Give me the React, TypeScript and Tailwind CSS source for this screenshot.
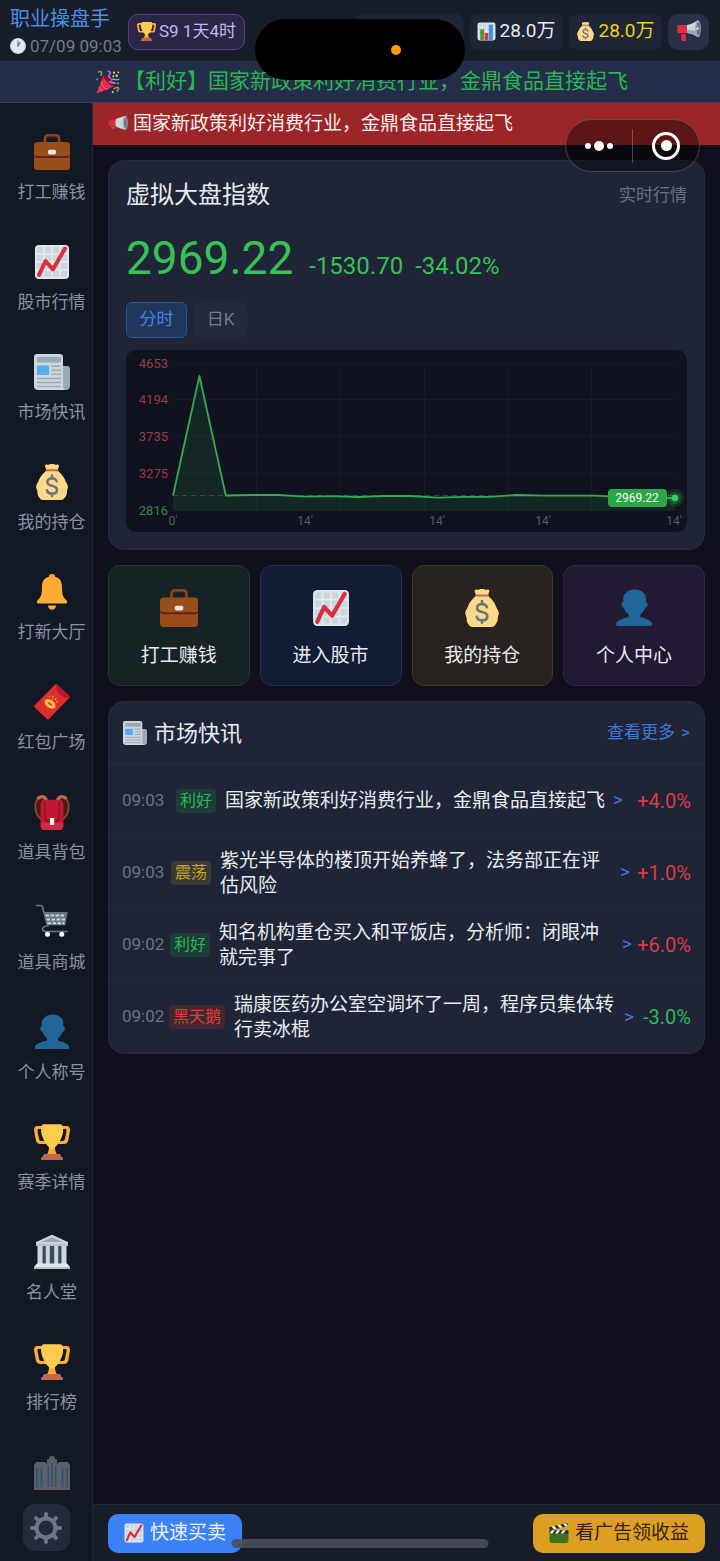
import type { ReactNode, SVGProps } from 'react';

type IconProps = SVGProps<SVGSVGElement>;

function Glyph({ children, ...rest }: IconProps & { children: ReactNode }) {
  return (
    <svg viewBox="0 0 36 36" aria-hidden="true" {...rest}>
      {children}
    </svg>
  );
}

const Briefcase = (p: IconProps) => (
  <Glyph {...p}>
    <path d="M11 10V4.500C11 2.600 12.200 1.400 14 1.400h8c1.800 0 3 1.200 3 3.100V10" fill="none" stroke="#8a451a" strokeWidth="2.600" />
    <path d="M12.400 9V4.400c0-1 .6-1.600 1.600-1.600h8c1 0 1.600.6 1.600 1.600V9" fill="none" stroke="#662113" strokeWidth=".8" />
    <rect y="8" width="36" height="28" rx="3.500" fill="#9a4e1c" />
    <path d="M0 20v1.500C0 23.400 1.500 24 3.500 24h29c2 0 3.500-.6 3.500-2.500V20c0 1.500-1.500 2-3.500 2h-29C1.500 22 0 21.500 0 20z" fill="#662113" />
    <rect x="14" y="15.800" width="8" height="4.600" rx="1.600" fill="#e1e8ed" />
  </Glyph>
);

const GridPaper = () => (
  <>
    <rect x="1" y="1" width="34" height="34" rx="4" fill="#e1e8ed" />
    <path
      fill="#cbd6dc"
      d="M31 3c1.103 0 2 .897 2 2v4h-6V3h4zm-4 16h6v6h-6v-6zm0-2v-6h6v6h-6zM25 3v6h-6V3h6zm-6 8h6v6h-6v-6zm0 8h6v6h-6v-6zM17 3v6h-6V3h6zm-6 8h6v6h-6v-6zm0 8h6v6h-6v-6zM3 5c0-1.103.897-2 2-2h4v6H3V5zm0 6h6v6H3v-6zm0 8h6v6H3v-6zm2 14c-1.103 0-2-.897-2-2v-4h6v6H5zm6 0v-6h6v6h-6zm8 0v-6h6v6h-6zm12 0h-4v-6h6v4c0 1.103-.897 2-2 2z"
    />
  </>
);

const ChartUp = (p: IconProps) => (
  <Glyph {...p}>
    <GridPaper />
    <path d="M5 31l6.500-14L19 25.300 31 4.500" fill="none" stroke="#dd2e44" strokeWidth="4" strokeLinecap="round" strokeLinejoin="round" />
  </Glyph>
);

const BarChart = (p: IconProps) => (
  <Glyph {...p}>
    <GridPaper />
    <rect x="6" y="14" width="7.500" height="20" fill="#5c913b" />
    <rect x="14.500" y="21" width="7" height="13" fill="#dd2e44" />
    <rect x="22.500" y="5" width="7.500" height="29" fill="#3b94d9" />
  </Glyph>
);

const Newspaper = (p: IconProps) => (
  <Glyph {...p}>
    <path d="M28 12h5c1.700 0 3 1.300 3 3v17c0 2-1.500 4-4 4h-7z" fill="#99aab5" />
    <path d="M3 0h23c1.700 0 3 1.300 3 3v29c0 2 1 4 3 4H4c-2.200 0-4-1.500-4-4V3c0-1.700 1.300-3 3-3z" fill="#ccd6dd" />
    <rect x="3" y="3" width="24" height="5.500" rx="1.500" fill="#99aab5" />
    <rect x="3" y="11.500" width="12" height="9.500" rx="1" fill="#55acee" />
    <path d="M17.500 12.200H27M17.500 16.200H27M17.500 20.200H27M3 24.400h24M3 28.500h24M3 32.500h24" stroke="#99aab5" strokeWidth="1.500" />
  </Glyph>
);

const MoneyBag = (p: IconProps) => (
  <Glyph {...p}>
    <path
      d="M12.500 6.500C12 4.500 11 3 11 1.500 12-.3 13.500.8 14.500.8S16.500-.2 18 .2c1.500-.4 2.500.6 3.500.6s2.500-1 3.500.7c0 1.500-1 3-1.500 5 4 3.500 6.500 6 8 10.500.5 1.800 1.800 2.500 2.300 5 .4 2.500-.8 3.500-.8 5.500 0 3-1 5-3 7-1 1.300-2 1.500-4 1.500H10c-2 0-3-.5-4-1.500-2-2-2.500-4-2.500-6.500 0-2-1.700-3.500-1.300-6 .3-2 1.800-3.500 2.300-5 1.500-4.500 4-7 8-10.500z"
      fill="#fdd888"
    />
    <path d="M12.500 5.200h11c1.400 0 1.400 2 0 2h-11c-1.400 0-1.400-2 0-2z" fill="#bf6952" />
    <path d="M22.600 17.200c-.7-2-2.300-3-4.600-3-2.700 0-4.700 1.400-4.700 3.700 0 5.300 9.700 2.500 9.700 7.800 0 2.500-2.100 4-5 4-2.500 0-4.400-1.200-5-3.400M18 11.500v3M18 29.500v2.500" fill="none" stroke="#67757f" strokeWidth="2.500" strokeLinecap="round" />
  </Glyph>
);

const Bell = (p: IconProps) => (
  <Glyph {...p}>
    <path d="M18 0c1.700 0 3 1.200 3.100 2.800C26.500 4.200 28 8.200 28 13c0 7 .8 10 4.300 13.300 1.500 1.400 1 3.200-1 3.200H4.700c-2 0-2.500-1.800-1-3.200C7.200 23 8 20 8 13c0-4.800 1.500-8.800 6.900-10.200C15 1.200 16.300 0 18 0z" fill="#ffac33" />
    <path d="M14 31.500h8c0 2.500-1.800 4.300-4 4.300s-4-1.800-4-4.300z" fill="#ffac33" />
  </Glyph>
);

const RedEnvelope = (p: IconProps) => (
  <Glyph {...p}>
    <path d="M21.200.6c.5-.5 1.200-.6 1.800-.1l12.300 11.300c.7.600.7 1.200.1 1.900L15 35c-.6.7-1.400.7-2.100.1L.7 23.400c-.7-.6-.7-1.400 0-2.100z" fill="#dd2e2e" />
    <path d="M21.800.3c.4-.2.900 0 1.200.2l12.300 11.300c.6.500.7 1.100.2 1.700-4.500 1-14-2.500-13.700-13.200z" fill="#b31b25" />
    <g stroke="#ffc83d" fill="none" strokeLinecap="round">
      <path d="M12 17c0 4 4 7 8 6M14 16.500c2 0 5.500 2.500 6 4.500" strokeWidth="2.800" />
      <path d="M15.500 12.700v.1M19 12.500v.7M21.800 14.800l-.4.500M23 18h.1M18 16h.1" strokeWidth="1.300" />
    </g>
  </Glyph>
);

const Backpack = (p: IconProps) => (
  <Glyph {...p}>
    <path d="M11 5C7 1.500 1.500 5 1.300 12c0 6.500 2.500 11 6 13.500zM25 5c4-3.500 9.500 0 9.700 7 0 6.500-2.500 11-6 13.500z" fill="#4a1a12" stroke="#8a4430" strokeWidth="1.800" />
    <path d="M3.500 5C6.500 1.200 11 1.800 12.500 6.500M32.500 5C29.500 1.200 25 1.800 23.500 6.500" fill="none" stroke="#bf6952" strokeWidth="3.200" />
    <path d="M11 5.800h14c2.800 0 4.500 2 4.500 5V31c0 3-.7 5-3.500 5H10c-2.800 0-3.500-2-3.500-5V10.800c0-3 1.700-5 4.500-5z" fill="#be1931" />
    <path d="M7 28.500c0 4.500 0 7.500 4 7.500h14c4 0 4-3 4-7.500-7 1-15 1-22 0z" fill="#d32a40" />
    <path d="M11 8v15c0 2.500 1.500 4 4 4h6c2.500 0 4-1.500 4-4V8" fill="none" stroke="#8c1024" strokeWidth="1.400" />
    <rect x="16" y="24" width="4.200" height="7" fill="#fff" />
  </Glyph>
);

const Cart = (p: IconProps) => (
  <Glyph {...p}>
    <path d="M2.500 1.500h4.200c1 0 1.500.5 1.800 1.500l5.200 19c-3.500.3-5.200 1.600-5.200 3.200 0 2 2 2.300 4 2.300H33" fill="none" stroke="#66757f" strokeWidth="1.700" strokeLinecap="round" />
    <path d="M9.500 8h24.200L31.200 21.200H13.200z" fill="#66757f" />
    <path d="M11.500 11.500h20M12.500 15.500h18.500M13.500 19.200h17" stroke="#ccd6dd" strokeWidth="2" strokeDasharray="3.600 1.400" />
    <circle cx="13.500" cy="30.200" r="2.500" fill="#f5f8fa" />
    <circle cx="27.800" cy="30.200" r="2.500" fill="#f5f8fa" />
  </Glyph>
);

const Person = (p: IconProps) => (
  <Glyph {...p}>
    <path
      fill="#226699"
      d="M24 26.799v-2.566c2-1.348 4.080-3.779 4.703-6.896.186.103.206.170.413.170.991 0 1.709-1.287 1.709-2.873 0-1.562-.823-2.827-1.794-2.865.187-.674.293-1.577.293-2.735C29.324 5.168 26 .527 18.541.527c-6.629 0-10.777 4.641-10.777 8.507 0 1.123.069 2.043.188 2.755-.911.137-1.629 1.352-1.629 2.845 0 1.587.804 2.873 1.796 2.873.206 0 .025-.067.209-.170C8.952 20.453 11 22.885 13 24.232v2.414c-5 .645-12 3.437-12 6.230v1.061C1 35 2.076 35 3.137 35h29.725C33.924 35 35 35 35 33.938v-1.061c0-2.615-6-5.225-11-6.078z"
    />
  </Glyph>
);

const Trophy = (p: IconProps) => (
  <Glyph {...p}>
    <path
      fill="#ffac33"
      d="M5.123 5h6C12.227 5 13 4.896 13 6V4c0-1.104-.773-2-1.877-2h-8c-2 0-3.583 2.125-3 5 0 0 1.791 9.375 1.917 9.958C2.373 18.500 4.164 20 6.081 20h6.958c1.105 0-.039-1.896-.039-3v-2c0 1.104-.773 2-1.877 2h-4c-1.104 0-1.833-1.042-2-2S3.539 7 3.539 7c-.167-1.500.479-2 1.584-2zm25.812 0h-6C23.831 5 23 4.896 23 6V4c0-1.104.831-2 1.935-2h8c2 0 3.584 2.125 3 5 0 0-1.633 9.419-1.771 10-.354 1.500-2.042 3-4 3h-7.146C21.914 20 23 18.104 23 17v-2c0 1.104.831 2 1.935 2h4c1.104 0 1.833-1.042 2-2s1.584-8 1.584-8c.166-1.500-.479-2-1.584-2zM20.832 22c0-6.958-2.709 0-2.709 0s-3-6.958-3 0-3.291 10-3.291 10h12.292c-.001 0-3.292-3.042-3.292-10z"
    />
    <path fill="#ffcc4d" d="M29.123 6.577c0 6.775-6.770 18.192-11 18.192-4.231 0-11-11.417-11-18.192 0-5.195 1-6.319 3-6.319 1.374 0 6.025-.027 8-.027l7-.001c2.917-.001 4 .684 4 6.347z" />
    <path
      fill="#c1694f"
      d="M27 33c0 1.104.227 2-.877 2h-16C9.018 35 9 34.104 9 33v-1c0-1.104 1.164-2 2.206-2h13.917c1.042 0 1.877.896 1.877 2v1zM29 34.625c0 .760.165 1.375-1.252 1.375H8.498C7.206 36 7 35.385 7 34.625v-.250C7 33.615 7.738 33 8.498 33h19.250c.759 0 1.252.615 1.252 1.375v.250z"
    />
  </Glyph>
);

const Temple = (p: IconProps) => (
  <Glyph {...p}>
    <path d="M4 11h28v20H4z" fill="#3e4a55" />
    <path d="M3.500 11h5v19h-5zM11.800 11h4v19h-4zM20.200 11h4v19h-4zM27.500 11h5v19h-5z" fill="#ccd6dd" />
    <path d="M18 .8L34 8v3H2V8z" fill="#ccd6dd" />
    <path d="M18 3.200L28.500 8h-21z" fill="#99aab5" />
    <path d="M2 9.800h32V12H2z" fill="#b8c5cd" />
    <path d="M3 29.500h30l3 3.500v1.800H0V33z" fill="#e1e8ed" />
    <path d="M0 33h36v1.800H0z" fill="#b8c5cd" />
  </Glyph>
);

const Skyline = (p: IconProps) => (
  <Glyph {...p}>
    <path d="M0 36V11l2-3h9l2 2V6l2-1c0-4.500 6-4.500 6 0l2 1v4l2-2h9l2 3v25z" fill="#8b8f98" />
    <path d="M3 14v19M7.500 14v19M14.500 12v21M18 9v24M21.500 12v21M28.500 14v19M33 14v19" stroke="#3f7ba6" strokeWidth="1.800" />
    <path d="M5.200 13v22M10.500 13v22M16.200 10v25M19.800 10v25M25.500 13v22M30.800 13v22" stroke="#a08f86" strokeWidth="1.600" />
    <path d="M0 34.200h36V36H0z" fill="#a08f86" />
  </Glyph>
);

const Gear = (p: IconProps) => (
  <Glyph {...p}>
    <circle cx="18" cy="18" r="10.600" fill="none" stroke="currentColor" strokeWidth="4.600" />
    <path d="M18 7V2.200M18 29v4.800M7 18H2.200M29 18h4.800M10.200 10.200L6.800 6.800M25.800 25.800l3.400 3.400M25.800 10.200l3.400-3.400M10.200 25.800l-3.400 3.400" stroke="currentColor" strokeWidth="4.400" strokeLinecap="round" />
  </Glyph>
);

const Megaphone = (p: IconProps) => (
  <Glyph {...p}>
    <path d="M5.500 17h7.500l.5 13c0 1-.7 1.600-1.700 1.600H8.500c-1.200 0-1.800-.7-2-1.800z" fill="#dd2e44" />
    <path d="M2.500 7.500H17v12H2.500c-1.300 0-2-.8-2-2v-8c0-1.200.7-2 2-2z" fill="#dd2e44" />
    <path d="M5.500 19.500H13v1.800H5.600z" fill="#a0041e" />
    <path d="M15 7.500C21 6.500 26 4 31.500.5v25C26 22 21 20 15 19.500z" fill="#ccd6dd" />
    <path d="M15 14.500l16 2v9C26 22 21 20 15 19.500z" fill="#99aab5" />
    <ellipse cx="31.500" cy="13" rx="4.300" ry="12.800" fill="#99aab5" />
    <ellipse cx="32" cy="13" rx="2.700" ry="10" fill="#66757f" />
    <circle cx="30.800" cy="13" r="2" fill="#ccd6dd" />
  </Glyph>
);

const Loudspeaker = (p: IconProps) => (
  <Glyph {...p}>
    <path d="M3 12l14-4v16L3 21c-2.500-1-2.500-8 0-9z" fill="#dd2e44" />
    <path d="M5 22l8 1.700c-1 4.500-7 4-8-1.700z" fill="#66757f" />
    <path d="M15 8.500L31 3v26l-16-5.500c-2-4-2-11 0-15z" fill="#ccd6dd" />
    <ellipse cx="31" cy="16" rx="4.500" ry="13" fill="#99aab5" />
    <ellipse cx="31.500" cy="16" rx="2.400" ry="9" fill="#66757f" />
  </Glyph>
);

const Party = (p: IconProps) => (
  <Glyph {...p}>
    <path d="M11.500 8L1 33.500c-.5 1.300.3 2 1.500 1.500L28 24.500C22 21 15.500 15 11.500 8z" fill="#dd2e44" />
    <path d="M8 17c1 6 5 10.500 9.500 12.200M4.500 25.500c.8 2.500 2.500 4.500 5 6" stroke="#ea596e" strokeWidth="2" fill="none" />
    <ellipse cx="20" cy="16" rx="4" ry="11.500" transform="rotate(-45 20 16)" fill="#a0041e" />
    <path d="M4 3c4-2 6 1 3.500 5M27 28c4-2 6-3 7-1s-3 3-2 5" stroke="#77b255" strokeWidth="2.200" fill="none" strokeLinecap="round" />
    <path d="M18 2c4 0 4 3 2 5s0 4 1.500 5" stroke="#8f7bea" strokeWidth="2.400" fill="none" strokeLinecap="round" />
    <path d="M23 15c3-3 7 1 11-1M20 18l9 2" stroke="#55acee" strokeWidth="2.200" fill="none" strokeLinecap="round" />
    <g fill="#ffcc4d">
      <circle cx="27" cy="4" r="1.700" />
      <circle cx="31" cy="8.500" r="1.900" />
      <circle cx="26" cy="9.500" r="1.500" />
      <circle cx="33.500" cy="3.500" r="1.400" />
      <circle cx="33" cy="20" r="1.400" />
      <circle cx="25" cy="33" r="1.500" />
    </g>
    <circle cx="1.800" cy="14" r="1.600" fill="#9266cc" />
  </Glyph>
);

const Clock = (p: IconProps) => (
  <Glyph {...p}>
    <circle cx="18" cy="18" r="17" fill="#e1e8ed" stroke="#ccd6dd" strokeWidth="2" />
    <path d="M18 19V6.500M18 19l4.500-9" stroke="#66757f" strokeWidth="2.600" strokeLinecap="round" />
  </Glyph>
);

const Clapper = (p: IconProps) => (
  <Glyph {...p}>
    <path d="M1 17h34v15c0 2.200-1.800 4-4 4H5c-2.200 0-4-1.800-4-4z" fill="#3e721d" />
    <path d="M1 13h34v6H1z" fill="#292f33" />
    <path d="M5 13h5l-4 6H1zM15 13h5l-4 6h-5zM25 13h5l-4 6h-5z" fill="#f5f8fa" />
    <path d="M0 7.500L32.500 0l1.400 5.800L1.400 13.300z" fill="#292f33" />
    <path d="M4.500 6.500L9.500 5.300 14 10.500l-5 1.100zM15 4L20 2.900l4.500 5.100-5 1.200zM25.500 1.600l4.500-1 3.900 5.200-4 .9z" fill="#f5f8fa" />
  </Glyph>
);

const navItems = [
  { label: '打工赚钱', Icon: Briefcase },
  { label: '股市行情', Icon: ChartUp },
  { label: '市场快讯', Icon: Newspaper },
  { label: '我的持仓', Icon: MoneyBag },
  { label: '打新大厅', Icon: Bell },
  { label: '红包广场', Icon: RedEnvelope },
  { label: '道具背包', Icon: Backpack },
  { label: '道具商城', Icon: Cart },
  { label: '个人称号', Icon: Person },
  { label: '赛季详情', Icon: Trophy },
  { label: '名人堂', Icon: Temple },
  { label: '排行榜', Icon: Trophy },
];

const shortcuts = [
  { label: '打工赚钱', Icon: Briefcase, tone: 'border-[#20382f] bg-[#172225]' },
  { label: '进入股市', Icon: ChartUp, tone: 'border-[#1b2f57] bg-[#131c35]' },
  { label: '我的持仓', Icon: MoneyBag, tone: 'border-[#443823] bg-[#28231f]' },
  { label: '个人中心', Icon: Person, tone: 'border-[#382350] bg-[#221932]' },
];

const news = [
  { time: '09:03', tag: '利好', tone: 'bg-[#1d3d36] text-[#2fb556]', text: '国家新政策利好消费行业，金鼎食品直接起飞', change: '+4.0%', up: true, timeW: 'w-[54px]', changeW: 'w-[68px]' },
  { time: '09:03', tag: '震荡', tone: 'bg-[#3b3b36] text-[#c3a52e]', text: '紫光半导体的楼顶开始养蜂了，法务部正在评估风险', change: '+1.0%', up: true, timeW: 'w-[49px]', changeW: 'w-[61px]' },
  { time: '09:02', tag: '利好', tone: 'bg-[#1d3d36] text-[#2fb556]', text: '知名机构重仓买入和平饭店，分析师：闭眼冲就完事了', change: '+6.0%', up: true, timeW: 'w-[48px]', changeW: 'w-[59px]' },
  { time: '09:02', tag: '黑天鹅', tone: 'bg-[#43262f] text-[#e23b3b]', text: '瑞康医药办公室空调坏了一周，程序员集体转行卖冰棍', change: '-3.0%', up: false, timeW: 'w-[47px]', changeW: 'w-[57px]' },
];

const yTicks = [
  { v: '4653', y: 14 },
  { v: '4194', y: 50 },
  { v: '3735', y: 87 },
  { v: '3275', y: 124 },
];

const xTicks = [
  { v: "0'", x: 47 },
  { v: "14'", x: 179 },
  { v: "14'", x: 311 },
  { v: "14'", x: 417 },
  { v: "14'", x: 548 },
];

const series = [145.5, 26, 145.5, 145, 145, 146.6, 146.2, 147, 146, 146, 147.6, 146.8, 146.8, 145, 145.7, 145.7, 145.7, 147.2, 147.6, 148];
const points = series.map((y, i) => `${(47 + i * 26.42).toFixed(1)},${y}`).join(' ');

function IndexChart() {
  return (
    <svg viewBox="0 0 561 182" className="mt-3 block w-full rounded-[10px] bg-[#10131f]" role="img" aria-label="分时">
      <g stroke="#171b27" strokeWidth="1">
        {yTicks.map((t) => (
          <path key={t.v} d={`M47 ${t.y - 0.5}H549`} />
        ))}
        {[131, 215, 299, 382, 466].map((x) => (
          <path key={x} d={`M${x - 0.5} 14V161`} />
        ))}
      </g>
      <path d="M47 145.500H549" stroke="#34403f" strokeDasharray="5 4" />
      <polygon points={`47,161 ${points} 549,161`} fill="#2db24f" fillOpacity=".13" />
      <polyline points={points} fill="none" stroke="#34ab54" strokeWidth="1.800" strokeLinejoin="round" />
      <g fontSize="13" textAnchor="end" fill="#9d3845">
        {yTicks.map((t) => (
          <text key={t.v} x="42" y={t.y + 4}>
            {t.v}
          </text>
        ))}
        <text x="42" y="165" fill="#2f8b48">
          2816
        </text>
      </g>
      <g fontSize="12" textAnchor="middle" fill="#565b67">
        {xTicks.map((t) => (
          <text key={t.x} x={t.x} y="175">
            {t.v}
          </text>
        ))}
      </g>
      <circle cx="549" cy="148" r="9" fill="#2db24f" fillOpacity=".18" />
      <circle cx="549" cy="148" r="6" fill="#2db24f" fillOpacity=".3" />
      <circle cx="549" cy="148" r="3.200" fill="#37cf5f" />
      <rect x="482" y="139" width="59" height="18" rx="4" fill="#2ba649" />
      <text x="511" y="152" fontSize="12" textAnchor="middle" fill="#f2fff5">
        2969.22
      </text>
    </svg>
  );
}

export default function App() {
  return (
    <div className="relative flex h-screen flex-col overflow-hidden bg-[#0f101b] font-['Roboto','Noto_Sans_CJK_SC',sans-serif] text-[#e8ebf2]">
      <header className="flex h-[61px] shrink-0 items-center justify-between bg-[#181d2a] pt-0.5 pr-[11px] pl-[10px]">
        <div className="flex items-center gap-[7px]">
          <div className="flex w-[111px] flex-col gap-1 whitespace-nowrap">
            <h1 className="text-[20px] leading-6 text-[#4a90e8]">职业操盘手</h1>
            <p className="flex items-center gap-1 text-[17px] leading-[22px] text-[#737b8b]">
              <Clock className="size-4 shrink-0" />
              07/09 09:03
            </p>
          </div>
          <button className="flex h-9 items-center gap-[3px] rounded-[10px] border border-[#54418a] bg-[#2b2646] px-2 text-[17px] whitespace-nowrap text-[#c4b5f0]">
            <Trophy className="size-[19px]" />
            S9 1天4时
          </button>
        </div>
        <div className="flex items-center gap-[6px] text-[19px] whitespace-nowrap">
          <div className="h-9 w-[109px] rounded-[8px] bg-[#1f2534]" />
          <div className="flex h-9 w-[93px] items-center justify-center gap-[3px] rounded-[8px] bg-[#1f2534]">
            <BarChart className="size-[19px]" />
            28.0万
          </div>
          <div className="flex h-9 w-[93px] items-center justify-center gap-[3px] rounded-[8px] bg-[#1f2534] text-[#efd01f]">
            <MoneyBag className="size-[19px]" />
            28.0万
          </div>
          <button aria-label="公告" className="flex h-9 w-[41px] items-center justify-center rounded-[10px] bg-[#2a3045]">
            <Megaphone className="size-6" />
          </button>
        </div>
      </header>

      <div className="flex h-[42px] shrink-0 items-center gap-1 overflow-hidden border-b border-[#38425f] bg-[#242d49] pl-24 text-[21px] whitespace-nowrap text-[#2bb552]">
        <Party className="size-6 shrink-0" />
        【利好】国家新政策利好消费行业，金鼎食品直接起飞
      </div>

      <div className="flex min-h-0 flex-1">
        <aside className="flex w-[93px] shrink-0 flex-col border-r border-[#232838] bg-[#131825]">
          <nav className="min-h-0 flex-1 overflow-y-auto pt-[11px] pl-[11px] [scrollbar-width:none]">
            {navItems.map(({ label, Icon }) => (
              <a key={label} href="#" className="flex h-[110px] flex-col items-center justify-center gap-[10px] text-[17px] leading-6 whitespace-nowrap text-[#8a91a1]">
                <Icon className="size-9" />
                {label}
              </a>
            ))}
            <a href="#" aria-label="更多" className="flex flex-col items-center pt-5 opacity-60">
              <Skyline className="size-9" />
            </a>
          </nav>
          <div className="flex justify-center pt-[10px] pb-[10px]">
            <button aria-label="设置" className="flex size-[47px] items-center justify-center rounded-[12px] bg-[#242a3a] text-[#6b7785]">
              <Gear className="size-8" />
            </button>
          </div>
        </aside>

        <div className="flex min-w-0 flex-1 flex-col">
          <div className="flex h-[42px] shrink-0 items-center gap-[5px] bg-[#9b2527] pl-[15px] text-[19px] whitespace-nowrap text-[#fdeeee]">
            <Loudspeaker className="size-5 shrink-0" />
            国家新政策利好消费行业，金鼎食品直接起飞
          </div>

          <main className="flex min-h-0 flex-1 flex-col gap-[15px] overflow-y-auto p-[15px] [scrollbar-width:none]">
            <section className="shrink-0 rounded-[16px] border border-[#262c3e] bg-[#1f2536] px-[17px] pt-5 pb-[17px]">
              <div className="flex items-center justify-between leading-7">
                <h2 className="text-[24px]">虚拟大盘指数</h2>
                <span className="text-[17px] text-[#697080]">实时行情</span>
              </div>
              <div className="mt-[25px] flex h-[48px] items-baseline text-[24px] leading-[48px] text-[#35c255]">
                <strong className="text-[46px] font-normal">2969.22</strong>
                <span className="ml-4">-1530.70</span>
                <span className="ml-3">-34.02%</span>
              </div>
              <div className="mt-5 flex gap-[7px] text-[17px]">
                <button className="h-9 w-[61px] rounded-[6px] border border-[#2a5497] bg-[#20365a] text-[#4583e8]">分时</button>
                <button className="h-9 w-[53px] rounded-[6px] bg-[#232939] text-[#767d8c]">日K</button>
              </div>
              <IndexChart />
            </section>

            <section className="grid shrink-0 grid-cols-4 gap-[10px]">
              {shortcuts.map(({ label, Icon, tone }) => (
                <button key={label} className={`flex flex-col items-center gap-[17px] rounded-[12px] border pt-[23px] pb-[17px] text-[19px] leading-6 ${tone}`}>
                  <Icon className="size-[38px]" />
                  {label}
                </button>
              ))}
            </section>

            <section className="shrink-0 overflow-hidden rounded-[16px] border border-[#262c3e] bg-[#1f2536]">
              <div className="flex h-[63px] items-center justify-between border-b border-[#282e40] px-[14px]">
                <h2 className="flex items-center gap-[7px] text-[22px]">
                  <Newspaper className="size-6" />
                  市场快讯
                </h2>
                <a href="#" className="flex gap-[6px] text-[17px] text-[#3f78dc]">
                  查看更多 <span>&gt;</span>
                </a>
              </div>
              <ul>
                {news.map((n) => (
                  <li key={n.text} className="flex h-[72px] items-center border-b border-[#252b3c] px-[13px] last:border-b-0">
                    <time className={`shrink-0 text-[17px] text-[#6a7181] ${n.timeW}`}>{n.time}</time>
                    <span className={`shrink-0 rounded-[4px] px-1 text-[16px] leading-6 ${n.tone}`}>{n.tag}</span>
                    <p className="ml-[9px] max-w-[395px] min-w-0 flex-1 text-[19px] leading-[25px]">{n.text}</p>
                    <span className="ml-auto shrink-0 text-[19px] text-[#3f78dc]">&gt;</span>
                    <span className={`shrink-0 text-right text-[20px] ${n.changeW} ${n.up ? 'text-[#df3a46]' : 'text-[#2dba54]'}`}>{n.change}</span>
                  </li>
                ))}
              </ul>
            </section>
          </main>

          <footer className="flex h-[57px] shrink-0 items-center justify-between border-t border-[#232a3a] bg-[#181d2a] px-[15px] text-[19px]">
            <button className="flex h-[39px] items-center gap-[6px] rounded-[10px] bg-[#3b82f6] px-4 text-[#eef4ff]">
              <ChartUp className="size-5" />
              快速买卖
            </button>
            <button className="flex h-[39px] items-center gap-[6px] rounded-[10px] bg-[#dc9f22] px-4 text-[#33230a]">
              <Clapper className="size-5" />
              看广告领收益
            </button>
          </footer>
        </div>
      </div>

      <div className="absolute top-[19px] left-1/2 flex h-[61px] w-[210px] -translate-x-1/2 items-center justify-end rounded-full bg-black pr-16">
        <span className="size-[10px] rounded-full bg-[#ff9a0a]" />
      </div>

      <div className="absolute top-[119px] right-5 flex h-[53px] w-[135px] items-center rounded-full border border-white/20 bg-black/40">
        <button aria-label="菜单" className="flex flex-1 items-center justify-center gap-[3px]">
          <span className="size-[6px] rounded-full bg-white" />
          <span className="size-[10px] rounded-full bg-white" />
          <span className="size-[6px] rounded-full bg-white" />
        </button>
        <span className="h-[34px] w-px bg-white/25" />
        <button aria-label="关闭" className="flex flex-1 items-center justify-center">
          <span className="flex size-7 items-center justify-center rounded-full border-[3px] border-white">
            <span className="size-[11px] rounded-full bg-white" />
          </span>
        </button>
      </div>

      <div className="absolute bottom-[13px] left-1/2 h-[9px] w-[257px] -translate-x-1/2 rounded-full bg-[#4a4f5c]/90" />
    </div>
  );
}
